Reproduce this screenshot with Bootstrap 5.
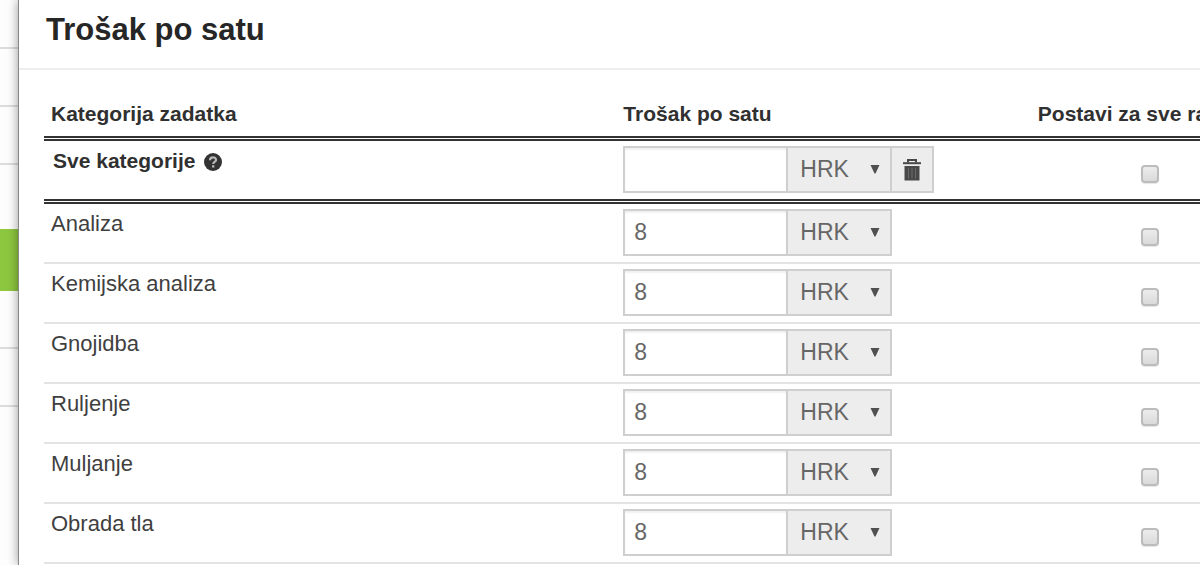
<!DOCTYPE html>
<html lang="hr">
<head>
<meta charset="utf-8">
<meta name="viewport" content="width=device-width, initial-scale=1">
<title>Trošak po satu</title>
<link href="https://cdn.jsdelivr.net/npm/bootstrap@5.3.0/dist/css/bootstrap.min.css" rel="stylesheet">
<style>
body { font-family: "Liberation Sans", Arial, sans-serif; font-size: 22px; line-height: 30px; color: #3f3f3f; background: #fdfdfd; }
.side-rail { width: 19px; }
.side-item { height: 58px; border-bottom: 2px solid #dcdcdc; }
.side-first { height: 49px; }
.side-last { height: 64px; border: 0; }
.side-active { height: 62px; background: #8dc63f; border: 0; }
.dialog-pane { background: #fff; border-left: 1px solid #888; box-shadow: 0 0 10px rgba(0,0,0,.4); margin-left: -1px; min-width: 0; }
.dialog-head { padding: 10px 27px 18px; border-bottom: 2px solid #eee; }
.dialog-title { font-size: 31px; line-height: 40px; font-weight: 700; color: #262626; }
.dialog-main { padding: 22px 0 0 25px; }
.cost-table { width: 106%; table-layout: fixed; border-collapse: separate; border-spacing: 0; }
.col-cost { width: 414px; }
.col-all { width: 239px; }
.cost-table th, .cost-table td { padding: 5px 7px 6px; vertical-align: top; border-bottom: 2px solid #e3e3e3; }
.cost-table th { font-size: 21px; color: #303030; white-space: nowrap; }
.cost-table thead th { padding: 7px; border-bottom: 5px double #333; }
.cost-table .row-all > * { border-bottom: 5px double #333; }
.cost-table tbody th[scope=row] { font-weight: 400; font-size: 22px; color: #3f3f3f; }
.cost-table .row-all th[scope=row] { font-weight: 700; font-size: 21px; color: #303030; padding-left: 9px; }
.amount, .currency, .trash-btn { height: 47px; border: 2px solid #cfcfcf; border-radius: 0; font-size: 23px; color: #666; }
.amount { width: 165px; padding: 0 9px; background: #fff; box-shadow: inset 0 2px 2px rgba(0,0,0,.06); }
.currency { width: 106px; margin-left: -2px; padding: 0 30px 2px 12px; appearance: none; background: #ededed url("data:image/svg+xml,%3Csvg xmlns='http://www.w3.org/2000/svg' width='10' height='10'%3E%3Cpath d='M.5 1h9L5.500 9.500h-1z' fill='%23505050'/%3E%3C/svg%3E") no-repeat right 10px top 16px; }
.trash-btn { width: 44px; margin-left: -2px; padding: 0; background: #ededed; }
.help-btn { width: 20px; height: 20px; margin-left: 8px; }
.pick { appearance: none; width: 18px; height: 18px; margin: 19px auto 0; border: 2px solid #bcbcbc; border-radius: 4px; background: linear-gradient(#ececec, #dadada); box-shadow: 0 1px 1px rgba(0,0,0,.1); }
.pick:checked { background: #8dc63f; }
</style>
</head>
<body>
<div class="d-flex min-vh-100 overflow-hidden">
  <nav class="side-rail flex-shrink-0" aria-label="Izbornik">
    <div class="side-item side-first"></div>
    <div class="side-item"></div>
    <div class="side-item"></div>
    <div class="side-item side-last"></div>
    <div class="side-item side-active"></div>
    <div class="side-item"></div>
    <div class="side-item"></div>
  </nav>
  <main class="dialog-pane flex-grow-1 position-relative overflow-visible">
    <header class="dialog-head"><h1 class="dialog-title m-0">Trošak po satu</h1></header>
    <div class="dialog-main">
      <table class="cost-table">
        <colgroup><col><col class="col-cost"><col class="col-all"></colgroup>
        <thead>
          <tr><th scope="col">Kategorija zadatka</th><th scope="col">Trošak po satu</th><th scope="col" class="text-center">Postavi za sve radnike</th></tr>
        </thead>
        <tbody>
          <tr class="row-all">
            <th scope="row"><span class="d-flex align-items-center">Sve kategorije
              <button type="button" class="help-btn btn p-0 border-0 d-flex" aria-label="Pomoć"><svg width="20" height="20" viewBox="0 0 20 20"><circle cx="10" cy="11" r="9" fill="#333"/><path d="M7 9.200C7 5.400 13 5.400 13 9C13 11 10.200 10.900 10.200 13" fill="none" stroke="#b8b8b8" stroke-width="2.200"/><path d="M9 14.300h2.400v2.200H9z" fill="#b8b8b8"/></svg></button></span></th>
            <td><div class="d-flex"><input class="amount" type="text" aria-label="Sve kategorije"><select class="currency" aria-label="Valuta"><option>HRK</option></select><button type="button" class="trash-btn d-flex align-items-center justify-content-center" aria-label="Obriši"><svg width="20" height="24" viewBox="0 0 20 24"><path d="M6 4.500V2h8v2.500" fill="none" stroke="#484848" stroke-width="2"/><path d="M1 4.200h18v2H1z" fill="#484848"/><path d="M2.500 8h15v14.500h-15z" fill="#484848"/><path d="M6.500 10v10.500M10 10v10.500M13.500 10v10.500" stroke="#6a6a6a" stroke-width="1"/></svg></button></div></td>
            <td><input class="pick d-block" type="checkbox" aria-label="Postavi sve kategorije"></td>
          </tr>
          <tr><th scope="row"><label for="c1">Analiza</label></th><td><div class="d-flex"><input id="c1" class="amount" type="text" value="8"><select class="currency" aria-label="Valuta"><option>HRK</option></select></div></td><td><input class="pick d-block" type="checkbox" aria-label="Postavi Analiza"></td></tr>
          <tr><th scope="row"><label for="c2">Kemijska analiza</label></th><td><div class="d-flex"><input id="c2" class="amount" type="text" value="8"><select class="currency" aria-label="Valuta"><option>HRK</option></select></div></td><td><input class="pick d-block" type="checkbox" aria-label="Postavi Kemijska analiza"></td></tr>
          <tr><th scope="row"><label for="c3">Gnojidba</label></th><td><div class="d-flex"><input id="c3" class="amount" type="text" value="8"><select class="currency" aria-label="Valuta"><option>HRK</option></select></div></td><td><input class="pick d-block" type="checkbox" aria-label="Postavi Gnojidba"></td></tr>
          <tr><th scope="row"><label for="c4">Ruljenje</label></th><td><div class="d-flex"><input id="c4" class="amount" type="text" value="8"><select class="currency" aria-label="Valuta"><option>HRK</option></select></div></td><td><input class="pick d-block" type="checkbox" aria-label="Postavi Ruljenje"></td></tr>
          <tr><th scope="row"><label for="c5">Muljanje</label></th><td><div class="d-flex"><input id="c5" class="amount" type="text" value="8"><select class="currency" aria-label="Valuta"><option>HRK</option></select></div></td><td><input class="pick d-block" type="checkbox" aria-label="Postavi Muljanje"></td></tr>
          <tr><th scope="row"><label for="c6">Obrada tla</label></th><td><div class="d-flex"><input id="c6" class="amount" type="text" value="8"><select class="currency" aria-label="Valuta"><option>HRK</option></select></div></td><td><input class="pick d-block" type="checkbox" aria-label="Postavi Obrada tla"></td></tr>
        </tbody>
      </table>
    </div>
  </main>
</div>
</body>
</html>
